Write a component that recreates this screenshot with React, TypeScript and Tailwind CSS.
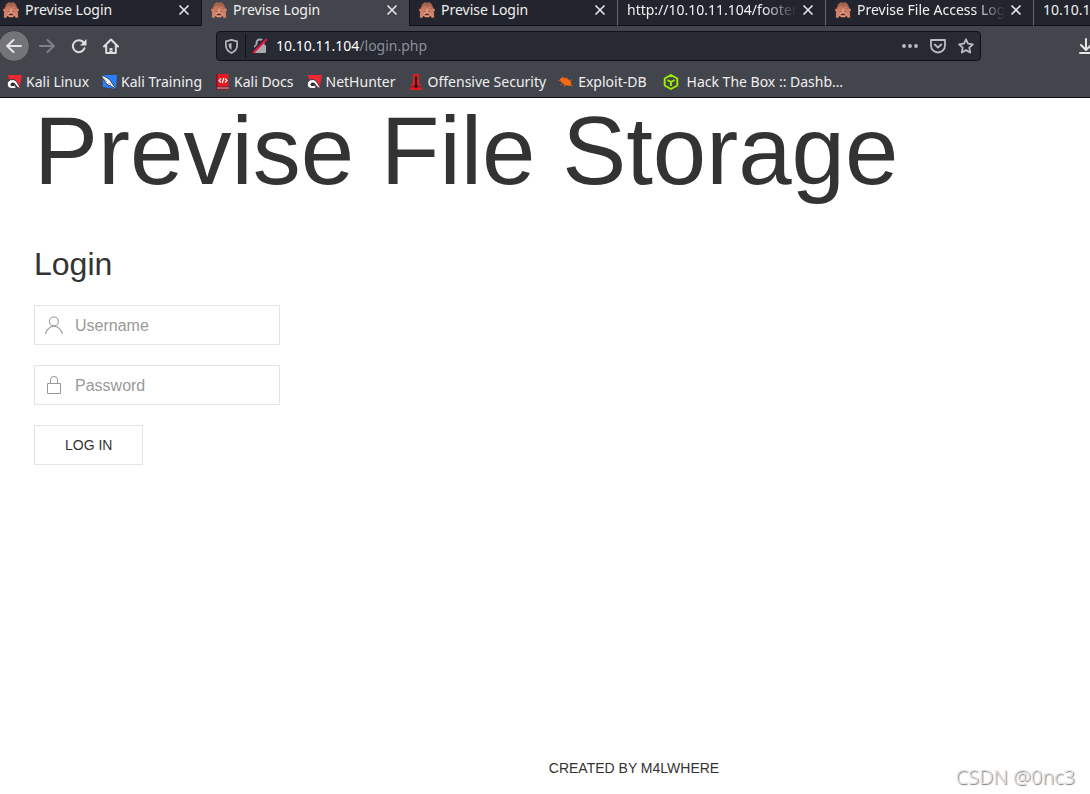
import type { ReactNode } from "react";

function Monkey() {
  return (
    <svg viewBox="0 0 16 16" className="size-4 shrink-0" aria-hidden="true">
      <path d="M3 2.500 5.500.3 8 .8l2.500-.5L13 2.500l1.500 4V12h-13V6.500z" fill="#a8634e" />
      <circle cx="1.500" cy="8" r="1.500" fill="#c98068" />
      <circle cx="14.500" cy="8" r="1.500" fill="#c98068" />
      <ellipse cx="8" cy="10.800" rx="5" ry="4.600" fill="#e09a80" />
      <path d="M.8 15.700 1 11l1.600-5.200 3.600-1.900 1.200.9v3.400L5 10.500l-1.300 5.200zM15.200 15.700 15 11l-1.600-5.200-3.600-1.900-1.200.9v3.400l2.400 2.300 1.300 5.200z" fill="#d28168" />
      <path d="M3.800 8V5.500M5.700 7.500V4.800M12.200 8V5.500M10.300 7.500V4.800" stroke="#a65b47" strokeWidth=".6" />
      <path d="M4.500 9.800h2.300M9.200 9.800h2.300" stroke="#8b4a3b" strokeWidth=".8" />
      <path d="M5.300 13.200q.5-1.700 2.700-1.700t2.700 1.700z" fill="#5c2625" />
    </svg>
  );
}

function Close() {
  return (
    <svg viewBox="0 0 12 12" className="size-3" fill="none" stroke="#e3e3e3" strokeWidth="1.7" aria-hidden="true">
      <path d="m1.500 1.500 9 9m0-9-9 9" />
    </svg>
  );
}

type TabProps = { title: string; icon?: boolean; active?: boolean; fade?: boolean; edge: string };

function Tab({ title, icon, active, fade, edge }: TabProps) {
  return (
    <div
      className={`flex h-[26px] w-52 shrink-0 items-start gap-1.5 border-r pl-[9px] pr-2 ${edge} ${
        active ? "bg-[#43454c]" : "border-b border-b-[#101117] bg-[#23252e]"
      }`}
    >
      {icon && <span className="mt-0.5"><Monkey /></span>}
      <button
        type="button"
        className={`-mr-1 min-w-0 flex-1 overflow-hidden whitespace-nowrap text-left leading-5 ${
          fade ? "[mask-image:linear-gradient(to_right,#000_80%,transparent)]" : ""
        }`}
      >
        {title}
      </button>
      <button type="button" aria-label={`Close ${title}`} className="mt-1 px-[3px]">
        <Close />
      </button>
    </div>
  );
}

function Bookmark({ label, children }: { label: string; children: ReactNode }) {
  return (
    <a href="#" className="flex shrink-0 items-center gap-1 whitespace-nowrap">
      <svg viewBox="0 0 16 16" className="size-4" aria-hidden="true">{children}</svg>
      {label}
    </a>
  );
}

const dragonHook = (
  <>
    <path d="M1.500 1H16l-2.500 13.500L5 9z" fill="#ee2832" />
    <path d="M14.300 13.500 10.500 7.500Q8 4.500 4.300 5.800 0 8 1.300 11.800q1.500 3.200 6 2.900l3.200-.8-1.500-1.700" fill="#fff" stroke="#25262c" strokeWidth=".9" />
    <path d="M11.600 13.200 8.800 9.300Q7 7.700 5 9.200q-1.500 1.700.3 2.700 1.500.6 3.700-.5l1.500 2z" fill="#3a2830" />
  </>
);

export default function App() {
  return (
    <div className="relative flex min-h-screen flex-col overflow-x-hidden bg-white font-['Liberation_Sans',Arial,sans-serif] text-[#333]">
      <header className="border-b border-[#101117] bg-[#43454c] font-['Noto_Sans',sans-serif] text-sm text-[#f0f0f0]">
        <nav aria-label="Browser tabs" className="-ml-1.5 flex overflow-hidden bg-[#23252e]">
          <Tab title="Previse Login" icon edge="border-r-[#101117]" />
          <Tab title="Previse Login" icon active edge="border-r-[#101117]" />
          <Tab title="Previse Login" icon edge="border-r-[#64666d]" />
          <Tab title="http://10.10.11.104/footer" fade edge="border-r-[#64666d]" />
          <Tab title="Previse File Access Log" icon fade edge="border-r-[#64666d]" />
          <Tab title="10.10.11.104/" edge="border-r-[#64666d]" />
        </nav>

        <div className="flex h-10 items-center">
          <div className="-ml-0.5 flex w-[218px] shrink-0 items-center">
            <button type="button" aria-label="Back" className="flex size-8 shrink-0 items-center justify-center rounded-full border border-[#393b42] bg-[#737478]">
              <svg viewBox="0 0 16 16" className="size-4" fill="none" stroke="#e5e5e5" strokeWidth="2" strokeLinecap="round" strokeLinejoin="round"><path d="M15 8H1m6.500-6L1.200 8l6.300 6" /></svg>
            </button>
            <button type="button" aria-label="Forward" className="ml-[9px] size-4">
              <svg viewBox="0 0 16 16" className="size-4" fill="none" stroke="#7e8085" strokeWidth="2" strokeLinecap="round" strokeLinejoin="round"><path d="M1 8h14M8.500 2l6.300 6-6.300 6" /></svg>
            </button>
            <button type="button" aria-label="Reload" className="ml-4 size-4">
              <svg viewBox="0 0 16 16" className="size-4" fill="none" stroke="#ddd" strokeWidth="2"><path d="M13.500 10.200A6 6 0 1 1 12.200 4L14 6" strokeLinecap="round" /><path d="M15.500 1v6.500H9z" fill="#ddd" stroke="none" /></svg>
            </button>
            <button type="button" aria-label="Home" className="ml-4 size-4">
              <svg viewBox="0 0 16 16" className="size-4" fill="none" stroke="#ddd" strokeWidth="2" strokeLinecap="round" strokeLinejoin="round"><path d="m1 8.500 7-7 7 7M3.200 7.500V15h9.600V7.500" /><path d="M8 10v4.500" strokeWidth="3" strokeLinecap="butt" /><circle cx="8" cy="12.500" r=".5" fill="#43454c" stroke="none" /></svg>
            </button>
          </div>
          <div className="flex h-[30px] min-w-0 flex-1 items-center rounded border border-[#111219] bg-[#272933] pr-1.5">
            <span className="flex h-6 w-[29px] shrink-0 items-center justify-center border-r border-[#101117]">
              <svg viewBox="0 0 16 16" className="size-[15px]" fill="none" stroke="#b8b8bc" strokeWidth="1.800"><path d="M8 1 2 2.600v4.800Q2.500 12.500 8 15q5.500-2.500 6-7.600V2.600z" strokeLinejoin="round" /><path d="M8 4.200 5 5v2.400Q5.300 10.100 8 11.600z" fill="#b8b8bc" stroke="none" /></svg>
            </span>
            <svg viewBox="0 0 16 16" className="ml-1.5 size-4 shrink-0" aria-hidden="true"><rect x="2" y="7" width="12" height="8" rx="1" fill="#aaabb0" /><path d="M4.500 7V5a3.500 3.500 0 0 1 7 0v2" fill="none" stroke="#aaabb0" strokeWidth="2" /><path d="M0 13.500 13.500 0" stroke="#272933" strokeWidth="2" /><path d="M1.200 15 14.800 1" stroke="#f0113f" strokeWidth="2" /></svg>
            <div className="relative ml-2 h-7 min-w-0 flex-1">
              <input aria-label="Address" defaultValue="10.10.11.104/login.php" className="h-7 w-full bg-transparent text-transparent caret-white outline-none" />
              <span aria-hidden="true" className="pointer-events-none absolute inset-0 leading-7 text-[#8d8f98]"><span className="text-white">10.10.11.104</span>/login.php</span>
            </div>
            <div className="flex items-center gap-3">
              <button type="button" aria-label="Page actions"><svg viewBox="0 0 16 16" className="size-4" fill="#bcbdc1"><circle cx="2" cy="8" r="1.900" /><circle cx="8" cy="8" r="1.900" /><circle cx="14" cy="8" r="1.900" /></svg></button>
              <button type="button" aria-label="Save to Pocket"><svg viewBox="0 0 16 16" className="size-4" fill="none" stroke="#bcbdc1" strokeWidth="1.800" strokeLinecap="round" strokeLinejoin="round"><path d="M1 2h14v5.500a7 7 0 0 1-14 0z" /><path d="m4.700 6.500 3.300 3 3.300-3" /></svg></button>
              <button type="button" aria-label="Bookmark this page"><svg viewBox="0 0 16 16" className="size-4" fill="none" stroke="#bcbdc1" strokeWidth="1.800" strokeLinejoin="round"><path d="m8 1.300 2 4.400 4.900.6-3.600 3.300.9 4.900L8 12.100l-4.200 2.400.9-4.900L1.100 6.300 6 5.700z" /></svg></button>
            </div>
          </div>
          <div className="flex w-[109px] shrink-0 justify-end overflow-hidden">
            <button type="button" aria-label="Downloads" className="-mr-[5px] size-4"><svg viewBox="0 0 16 16" className="size-4" fill="none" stroke="#e5e5e5" strokeWidth="2" strokeLinecap="round" strokeLinejoin="round"><path d="M7 1v10.500M2 7l5 5 5-5M1 15h14" /></svg></button>
          </div>
        </div>

        <nav aria-label="Bookmarks" className="flex h-[31px] items-center gap-3 pl-1.5">
          <Bookmark label="Kali Linux">{dragonHook}</Bookmark>
          <Bookmark label="Kali Training">
            <path d="M1.500 1H16l-1 14L2 13z" fill="#287fff" />
            <path d="M0 1.500 4 2.500 9 6l2.500 4 4 5.500-5.500-3.500-4-1.500L3 6z" fill="#fff" stroke="#25262c" strokeWidth=".8" />
            <path d="M3 4.500 6 8m1 1 3 1.500" stroke="#697184" strokeWidth=".7" />
          </Bookmark>
          <Bookmark label="Kali Docs">
            <path d="M2 0h12.500v15.500H2z" fill="#e51920" />
            <path d="M2 0h1.500v12.500h11v3H2z" fill="#74152b" />
            <path d="M3 14h11.500" stroke="#eee" strokeWidth=".8" />
            <path d="M7 4.500 5 6.500l2 2m4-4 2 2-2 2M9.700 4 8.300 9" fill="none" stroke="#fff" strokeWidth="1.200" />
          </Bookmark>
          <Bookmark label="NetHunter">{dragonHook}</Bookmark>
          <Bookmark label="Offensive Security">
            <path d="M5 0h6v8l3.500 8h-13L5 8z" fill="#e51b22" />
            <path d="m8 1 1.200 3-.5 5.500 1.500 3-2.200 2-2.200-2 1.500-3L6.800 4z" fill="#28141b" />
            <path d="m5 12-1.500 2M11 12l1.500 2" stroke="#6f151b" />
          </Bookmark>
          <Bookmark label="Exploit-DB">
            <path d="M1.500 5.500Q4 2 8.500 4.500q4 1 5 5-.5 3.500-4 2Q5 11.500 1.500 5.500z" fill="#f26a12" />
            <path d="M.5 6.500 4 7M4 2.500l1.500 2M9 3l-.5 2M4 10l-1 1.500m4-.5-.5 2M12 7l2-1.500M12 11l3 1" stroke="#d9641c" strokeWidth=".8" />
          </Bookmark>
          <a href="#" className="ml-1 flex shrink-0 items-center gap-2 whitespace-nowrap">
            <svg viewBox="0 0 16 16" className="size-4" fill="none" stroke="#9fef00" strokeWidth="1.900" strokeLinejoin="round"><path d="m8 1 6.300 3.500v7L8 15l-6.300-3.500v-7zM4.500 6 8 8l3.500-2M8 8v4" /></svg>
            Hack The Box :: Dashb…
          </a>
        </nav>
      </header>

      <main className="flex-1 px-[34px]">
        <h1 className="whitespace-nowrap text-8xl leading-[106px]">Previse File Storage</h1>
        <form className="mt-[39px] flex flex-col items-start gap-5" onSubmit={(e) => e.preventDefault()}>
          <h2 className="text-[32px] leading-[42px]">Login</h2>
          <label className="flex h-10 w-[246px] items-center border border-[#e5e5e5] pl-[9px]">
            <svg viewBox="0 0 20 20" className="size-5 shrink-0" fill="none" stroke="#999" strokeWidth="1.100" aria-hidden="true"><circle cx="9.900" cy="6.400" r="4.400" /><path d="M1.500 19c.8-4.200 4.200-7.700 8.400-7.700s7.700 3.500 8.500 7.700" /></svg>
            <input type="text" aria-label="Username" placeholder="Username" className="ml-[11px] h-[38px] min-w-0 flex-1 bg-transparent pt-px text-base outline-none placeholder:text-[#999]" />
          </label>
          <label className="flex h-10 w-[246px] items-center border border-[#e5e5e5] pl-[9px]">
            <svg viewBox="0 0 20 20" className="size-5 shrink-0" fill="none" stroke="#999" aria-hidden="true"><path d="M3.500 8.500h13v10h-13zM6.500 8V4.900a3.500 3.500 0 0 1 7 0V8" /></svg>
            <input type="password" aria-label="Password" placeholder="Password" className="ml-[11px] h-[38px] min-w-0 flex-1 bg-transparent pt-px text-base outline-none placeholder:text-[#999]" />
          </label>
          <button type="submit" className="h-10 border border-[#e5e5e5] px-[30px] text-sm uppercase">Log in</button>
        </form>
      </main>

      <footer className="pb-4 pl-[178px] text-center text-sm leading-5">
        <a href="#" className="uppercase">Created by m4lwhere</a>
      </footer>
      <p className="absolute bottom-[3px] right-[15px] font-['Noto_Sans',sans-serif] text-xl font-light leading-7 text-[#e4e4e4] [text-shadow:1px_1px_1px_#777]">CSDN @0nc3</p>
    </div>
  );
}
